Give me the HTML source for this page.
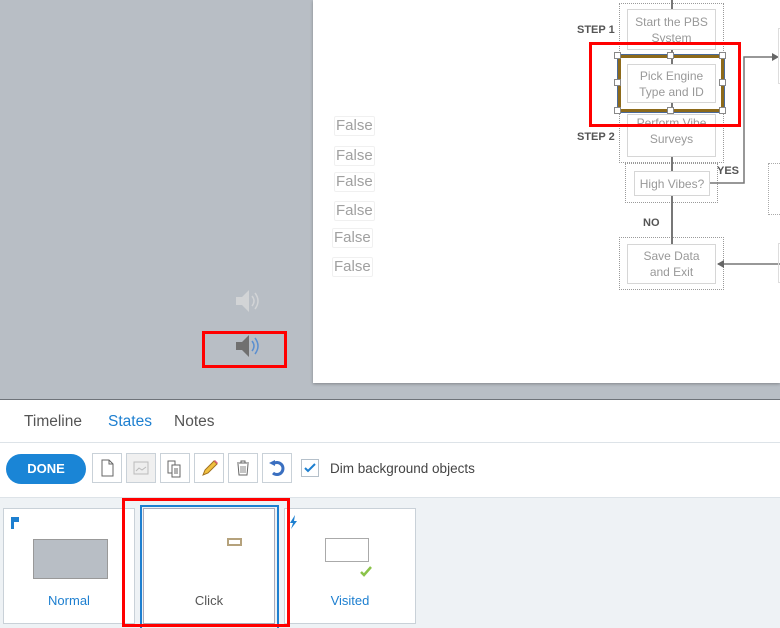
<!DOCTYPE html>
<html><head><meta charset="utf-8"><style>
*{margin:0;padding:0;box-sizing:border-box}
body{width:780px;height:628px;overflow:hidden;font-family:"Liberation Sans",sans-serif;background:#fff;position:relative}
.a{position:absolute}
.gray{left:0;top:0;width:780px;height:400px;background:#b8bec5;border-bottom:1px solid #6e7379}
.canvas{left:313px;top:0;width:467px;height:383px;background:#fff;box-shadow:0 1px 3px rgba(0,0,0,.3)}
.f{font-size:15px;color:#a0a0a0;border:1px solid #f0f0f0;border-radius:2px;padding:0 1px;line-height:18px}
.box{border:1px solid #d6d6d6;background:#fff;color:#999;font-size:12px;text-align:center;line-height:16px}
.dot{border:1px dotted #9a9a9a}
.step{font-size:11px;font-weight:bold;color:#555}
.tb{width:30px;height:30px;border:1px solid #c9d1d8;background:#fff;top:453px}
.card{top:508px;width:132px;height:116px;border:1px solid #c9d1d8;background:#fff;font-size:13px;text-align:center}
.h{width:7px;height:7px;border:1px solid #888;background:#fff}
</style></head><body>
<div class="a gray"></div>
<div class="a canvas"></div>
<div class="a f" style="left:334px;top:116px">False</div>
<div class="a f" style="left:334px;top:146px">False</div>
<div class="a f" style="left:334px;top:172px">False</div>
<div class="a f" style="left:334px;top:201px">False</div>
<div class="a f" style="left:332px;top:228px">False</div>
<div class="a f" style="left:332px;top:257px">False</div>
<svg class="a" style="left:235px;top:289px" width="26" height="24"><path d="M1 8h6l7-7v22l-7-7H1z" fill="#d2d4d6"/><path d="M17 7q4 5 0 10M20 4q6 8 0 16" stroke="#d2d4d6" stroke-width="1.5" fill="none"/></svg>
<svg class="a" style="left:235px;top:334px" width="26" height="24"><path d="M1 8h6l7-7v22l-7-7H1z" fill="#707070"/><path d="M17 7q4 5 0 10M20 4q6 8 0 16" stroke="#5b8fd0" stroke-width="1.5" fill="none"/></svg>
<div class="a" style="left:202px;top:331px;width:85px;height:37px;border:3px solid #f00"></div>
<div class="a dot" style="left:619px;top:3px;width:105px;height:160px"></div>
<div class="a dot" style="left:625px;top:163px;width:93px;height:40px"></div>
<div class="a dot" style="left:619px;top:237px;width:105px;height:53px"></div>
<div class="a" style="left:671px;top:0;width:2px;height:245px;background:#777"></div>
<div class="a box" style="left:627px;top:9px;width:89px;height:41px;padding-top:4px">Start the PBS<br>System</div>
<div class="a box" style="left:627px;top:114px;width:89px;height:43px;padding-top:0">Perform Vibe<br>Surveys</div>
<div class="a box" style="left:634px;top:171px;width:76px;height:25px;padding-top:4px">High Vibes?</div>
<div class="a box" style="left:627px;top:244px;width:89px;height:40px;padding-top:3px">Save Data<br>and Exit</div>
<div class="a" style="left:618px;top:55px;width:106px;height:57px;border:3px solid #8d6a1a;outline:1px solid #4a6a9a"></div>
<div class="a box" style="left:627px;top:64px;width:89px;height:39px;padding-top:3px;z-index:2">Pick Engine<br>Type and ID</div>
<div class="a h" style="left:614px;top:52px;z-index:3"></div><div class="a h" style="left:667px;top:52px;z-index:3"></div><div class="a h" style="left:719px;top:52px;z-index:3"></div>
<div class="a h" style="left:614px;top:79px;z-index:3"></div><div class="a h" style="left:719px;top:79px;z-index:3"></div>
<div class="a h" style="left:614px;top:107px;z-index:3"></div><div class="a h" style="left:667px;top:107px;z-index:3"></div><div class="a h" style="left:719px;top:107px;z-index:3"></div>
<div class="a" style="left:589px;top:42px;width:152px;height:85px;border:3px solid #f00;z-index:4"></div>
<div class="a step" style="left:577px;top:24px">STEP 1</div>
<div class="a step" style="left:577px;top:131px">STEP 2</div>
<div class="a step" style="left:717px;top:165px">YES</div>
<div class="a step" style="left:643px;top:217px">NO</div>
<svg class="a" style="left:700px;top:40px" width="80" height="240"><path d="M10 143H44V17H72" stroke="#777" stroke-width="1.5" fill="none"/><path d="M72 13l7 4-7 4z" fill="#666"/><path d="M80 224H18" stroke="#777" stroke-width="1.5"/><path d="M24 220l-7 4 7 4z" fill="#666"/></svg>
<div class="a" style="left:778px;top:28px;width:2px;height:56px;border:1px solid #ddd;border-right:0"></div>
<div class="a" style="left:768px;top:163px;width:12px;height:52px;border:1px dotted #aaa;border-right:0"></div>
<div class="a" style="left:778px;top:243px;width:2px;height:40px;border:1px solid #ddd;border-right:0"></div>
<div class="a" style="left:24px;top:413px;font-size:15.5px;color:#555">Timeline</div>
<div class="a" style="left:108px;top:413px;font-size:15.5px;color:#1d7fd0">States</div>
<div class="a" style="left:174px;top:413px;font-size:15.5px;color:#555">Notes</div>
<div class="a" style="left:0;top:442px;width:780px;height:1px;background:#dde3e8"></div>
<div class="a" style="left:6px;top:454px;width:80px;height:30px;border-radius:15px;background:#1a85d6;color:#fff;font-size:13px;font-weight:bold;text-align:center;line-height:30px">DONE</div>
<div class="a tb" style="left:92px"><svg width="28" height="28"><path d="M9 6h7l4 4v12H9z M16 6v4h4" stroke="#666" fill="none"/></svg></div>
<div class="a tb" style="left:126px;background:#f0f0f0"><svg width="28" height="28"><rect x="7" y="8" width="14" height="12" stroke="#bbb" fill="#eee"/><path d="M9 17l3-3 3 2 4-3" stroke="#bbb" fill="none"/></svg></div>
<div class="a tb" style="left:160px"><svg width="28" height="28"><path d="M7 7h7v12H7z" stroke="#666" fill="#fff"/><path d="M11 11h8v12h-8z" stroke="#666" fill="#fff"/><path d="M13 15h4M13 17h4M13 19h4" stroke="#666"/></svg></div>
<div class="a tb" style="left:194px"><svg width="28" height="28"><path d="M8 21l2-5 9-9 3 3-9 9z" fill="#f0c040" stroke="#a07020"/><path d="M19 7l3 3 1-1-3-3z" fill="#e06080"/></svg></div>
<div class="a tb" style="left:228px"><svg width="28" height="28"><path d="M8 9h12M12 9V7h4v2M9 10l1 11h8l1-11" stroke="#666" fill="none"/><path d="M12 12v7M14 12v7M16 12v7" stroke="#888"/></svg></div>
<div class="a tb" style="left:262px"><svg width="28" height="28"><path d="M10 10a6 6 0 1 1 0 9" stroke="#3a6fc0" stroke-width="3" fill="none"/><path d="M6 9l6-3v6z" fill="#3a6fc0"/></svg></div>
<div class="a" style="left:301px;top:459px;width:18px;height:18px;border:1px solid #b5c0ca;background:#fff"><svg width="16" height="16"><path d="M3 8l3 3 7-7" stroke="#1d7fd0" stroke-width="2" fill="none"/></svg></div>
<div class="a" style="left:330px;top:461px;font-size:13.5px;color:#444">Dim background objects</div>
<div class="a" style="left:0;top:497px;width:780px;height:131px;background:#eef2f5;border-top:1px solid #dde3e8"></div>
<div class="a card" style="left:3px"><svg class="a" style="left:6px;top:8px" width="10" height="12"><path d="M1 0v12h3V5h5V0z" fill="#1d7fd0"/></svg><div class="a" style="left:29px;top:30px;width:75px;height:40px;background:#b8bec5;border:1px solid #999"></div><div class="a" style="left:0;top:84px;width:130px;color:#1d7fd0">Normal</div></div>
<div class="a card" style="left:143px;border-color:#aab"><div class="a" style="left:83px;top:29px;width:15px;height:8px;border:2px solid #b5a27c"></div><div class="a" style="left:0;top:84px;width:130px;color:#555">Click</div></div>
<div class="a" style="left:140px;top:505px;width:139px;height:123px;border:2px solid #1d7fd0;border-bottom:0"></div>
<div class="a card" style="left:284px"><svg class="a" style="left:4px;top:6px" width="10" height="14"><path d="M6 0L1 8h3l-2 6 6-8H5z" fill="#1d7fd0"/></svg><div class="a" style="left:40px;top:29px;width:44px;height:24px;border:1px solid #aaa;background:#fff"></div><svg class="a" style="left:74px;top:56px" width="14" height="12"><path d="M2 7l3 3 7-8" stroke="#8bc34a" stroke-width="2.5" fill="none"/></svg><div class="a" style="left:0;top:84px;width:130px;color:#1d7fd0">Visited</div></div>
<div class="a" style="left:122px;top:498px;width:168px;height:129px;border:3px solid #f00"></div>
</body></html>
